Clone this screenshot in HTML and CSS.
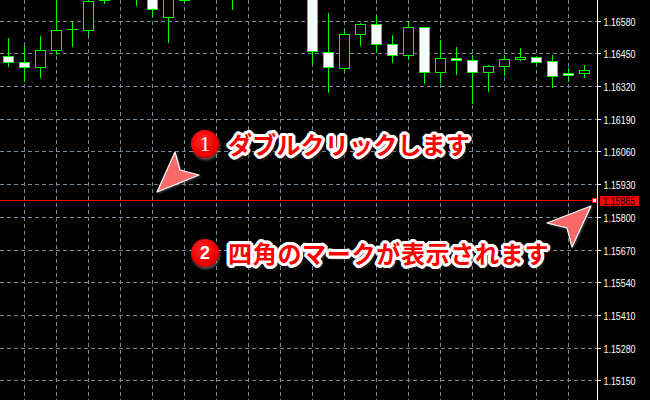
FILE: index.html
```html
<!DOCTYPE html>
<html lang="ja">
<head>
<meta charset="utf-8">
<title>Chart</title>
<link rel="stylesheet" href="styles.css">
</head>
<body>
<div class="chart">
  <svg class="plot" width="650" height="400" viewBox="0 0 650 400" xmlns="http://www.w3.org/2000/svg">
    <g class="grid">
      <path d="M0 21.5H597M0 53.5H597M0 86.5H597M0 119.5H597M0 151.5H597M0 184.5H597M0 217.5H597M0 250.5H597M0 282.5H597M0 315.5H597M0 348.5H597M0 380.5H597"/>
      <path d="M24.5 0V400M56.5 0V400M88.5 0V400M120.5 0V400M152.5 0V400M184.5 0V400M216.5 0V400M248.5 0V400M280.5 0V400M312.5 0V400M344.5 0V400M376.5 0V400M408.5 0V400M440.5 0V400M472.5 0V400M504.5 0V400M536.5 0V400M568.5 0V400"/>
    </g>
    <g class="wick">
      <path d="M8.5 38V67M24.5 46V82M40.5 36V78M56.5 0V55M72.5 22V47M88.5 0V35M104.5 0V4M136.5 0V6M152.5 0V17M168.5 0V43M184.5 0V2M232.5 0V10M312.5 0V63M328.5 13V93M344.5 31V71M360.5 23V46M376.5 16V53M392.5 35V63M408.5 21V60M424.5 27V84M440.5 40V83M456.5 47V75M472.5 55V104M488.5 65V92M504.5 55V76M520.5 48V61M536.5 57V65M552.5 55V88M568.5 68V82M584.5 65V78"/>
    </g>
    <g class="body-down">
      <rect x="35.5" y="50.5" width="10" height="17"/>
      <rect x="51.5" y="30.5" width="10" height="20"/>
      <rect x="83.5" y="1.5" width="10" height="29"/>
      <rect x="99.5" y="-5.5" width="10" height="6"/>
      <rect x="163.5" y="-5.5" width="10" height="23"/>
      <rect x="179.5" y="-5.5" width="10" height="6"/>
      <rect x="339.5" y="34.5" width="10" height="34"/>
      <rect x="355.5" y="24.5" width="10" height="10"/>
      <rect x="403.5" y="27.5" width="10" height="28"/>
      <rect x="435.5" y="58.5" width="10" height="14"/>
      <rect x="483.5" y="66.5" width="10" height="6"/>
      <rect x="499.5" y="59.5" width="10" height="7"/>
      <rect x="515.5" y="57.5" width="10" height="2"/>
      <rect x="579.5" y="70.5" width="10" height="3"/>
    </g>
    <g class="body-up">
      <rect x="3.5" y="56.5" width="10" height="6"/>
      <rect x="19.5" y="62.5" width="10" height="5"/>
      <rect x="147.5" y="-5.5" width="10" height="15"/>
      <rect x="307.5" y="-5.5" width="10" height="57"/>
      <rect x="323.5" y="52.5" width="10" height="15"/>
      <rect x="371.5" y="24.5" width="10" height="20"/>
      <rect x="387.5" y="44.5" width="10" height="11"/>
      <rect x="419.5" y="27.5" width="10" height="45"/>
      <rect x="451.5" y="58.5" width="10" height="2"/>
      <rect x="467.5" y="60.5" width="10" height="12"/>
      <rect x="531.5" y="57.5" width="10" height="5"/>
      <rect x="547.5" y="61.5" width="10" height="15"/>
      <rect x="563.5" y="73.5" width="10" height="2"/>
    </g>
    <path class="doji" d="M67 29.5H78"/>
    <path class="hline" d="M0 200.5H593"/>
    <rect class="hmark" x="592.5" y="198.5" width="4" height="4"/>
    <path class="axis" d="M597.5 0V400M597 21.5H601M597 53.5H601M597 86.5H601M597 119.5H601M597 151.5H601M597 184.5H601M597 217.5H601M597 250.5H601M597 282.5H601M597 315.5H601M597 348.5H601M597 380.5H601"/>
    <g class="ticks">
      <text x="603.5" y="25.5" textLength="32" lengthAdjust="spacingAndGlyphs">1.16580</text>
      <text x="603.5" y="57.5" textLength="32" lengthAdjust="spacingAndGlyphs">1.16450</text>
      <text x="603.5" y="90.5" textLength="32" lengthAdjust="spacingAndGlyphs">1.16320</text>
      <text x="603.5" y="123.5" textLength="32" lengthAdjust="spacingAndGlyphs">1.16190</text>
      <text x="603.5" y="155.5" textLength="32" lengthAdjust="spacingAndGlyphs">1.16060</text>
      <text x="603.5" y="188.5" textLength="32" lengthAdjust="spacingAndGlyphs">1.15930</text>
      <text x="603.5" y="221.5" textLength="32" lengthAdjust="spacingAndGlyphs">1.15800</text>
      <text x="603.5" y="254.5" textLength="32" lengthAdjust="spacingAndGlyphs">1.15670</text>
      <text x="603.5" y="286.5" textLength="32" lengthAdjust="spacingAndGlyphs">1.15540</text>
      <text x="603.5" y="319.5" textLength="32" lengthAdjust="spacingAndGlyphs">1.15410</text>
      <text x="603.5" y="352.5" textLength="32" lengthAdjust="spacingAndGlyphs">1.15280</text>
      <text x="603.5" y="384.5" textLength="32" lengthAdjust="spacingAndGlyphs">1.15150</text>
    </g>
    <rect class="price-tag" x="600" y="196" width="39" height="10"/>
    <text class="price-text" x="603" y="204.5" textLength="32" lengthAdjust="spacingAndGlyphs">1.15865</text>
  </svg>

  <svg class="pointer pointer-1" width="60" height="56" viewBox="150 145 60 56" xmlns="http://www.w3.org/2000/svg">
    <polygon points="157,192 175,152 180,170 199,175"/>
  </svg>
  <svg class="pointer pointer-2" width="60" height="56" viewBox="540 198 60 56" xmlns="http://www.w3.org/2000/svg">
    <polygon points="591,206 547,223 567,228 572,247"/>
  </svg>

  <div class="callout callout-1">
    <span class="num num-1">1</span>
    <span class="label label-1">ダブルクリックします</span>
  </div>
  <div class="callout callout-2">
    <span class="num num-2">2</span>
    <span class="label label-2">四角のマークが表示されます</span>
  </div>
</div>
</body>
</html>
```

FILE: styles.css
```css
html, body {
  margin: 0;
  padding: 0;
  background: #000;
}

.chart {
  position: relative;
  width: 650px;
  height: 400px;
  overflow: hidden;
  background: #000;
}

.plot {
  display: block;
}

.grid path {
  fill: none;
  stroke: #778899;
  stroke-width: 1;
  stroke-dasharray: 4 3;
  shape-rendering: crispEdges;
}

.wick path {
  fill: none;
  stroke: #00ff00;
  stroke-width: 1;
  shape-rendering: crispEdges;
}

.body-down rect {
  fill: #000;
  stroke: #00ff00;
  stroke-width: 1;
  shape-rendering: crispEdges;
}

.body-up rect {
  fill: #fff;
  stroke: #00ff00;
  stroke-width: 1;
  shape-rendering: crispEdges;
}

.doji {
  stroke: #00ff00;
  stroke-width: 1;
  shape-rendering: crispEdges;
}

.hline {
  stroke: #ff0000;
  stroke-width: 1;
  shape-rendering: crispEdges;
}

.hmark {
  fill: #fff;
  stroke: #ff0000;
  stroke-width: 1;
  shape-rendering: crispEdges;
}

.axis {
  fill: none;
  stroke: #fff;
  stroke-width: 1;
  shape-rendering: crispEdges;
}

.ticks text {
  fill: #fff;
  font-family: "Liberation Sans", Arial, sans-serif;
  font-size: 11.5px;
}

.price-tag {
  fill: #ff0000;
}

.price-text {
  fill: #000;
  font-family: "Liberation Sans", Arial, sans-serif;
  font-size: 11px;
}

.pointer {
  position: absolute;
  overflow: visible;
}

.pointer polygon {
  fill: #f86a6a;
  stroke: #fff;
  stroke-width: 1.2;
  stroke-linejoin: round;
  filter: drop-shadow(1px 1px 1px rgba(120, 120, 120, 0.6));
}

.pointer-1 {
  left: 150px;
  top: 145px;
}

.pointer-2 {
  left: 540px;
  top: 198px;
}

.callout {
  position: absolute;
  left: 191px;
  display: flex;
  align-items: center;
  gap: 9px;
  height: 28px;
}

.callout-1 {
  top: 130px;
}

.callout-2 {
  top: 239px;
}

.num {
  width: 28px;
  height: 28px;
  border-radius: 50%;
  background: radial-gradient(circle at 42% 38%, #ff2a2a 0%, #ee0000 55%, #c80000 100%);
  box-shadow: 1px 2px 3px rgba(200, 200, 200, 0.45);
  color: #fff;
  display: flex;
  align-items: center;
  justify-content: center;
  line-height: 1;
}

.num-1 {
  font-family: "Liberation Serif", "Times New Roman", serif;
  font-size: 22px;
}

.num-2 {
  font-family: "Liberation Sans", Arial, sans-serif;
  font-weight: bold;
  font-size: 18px;
}

.label {
  font-family: "Noto Sans CJK JP", sans-serif;
  font-weight: bold;
  font-size: 24px;
  line-height: 28px;
  color: #ff0000;
  white-space: nowrap;
  text-shadow:
    2px 0 0 #fff, -2px 0 0 #fff, 0 2px 0 #fff, 0 -2px 0 #fff,
    2px 2px 0 #fff, -2px 2px 0 #fff, 2px -2px 0 #fff, -2px -2px 0 #fff,
    3px 0 0 #fff, -3px 0 0 #fff, 0 3px 0 #fff, 0 -3px 0 #fff,
    3px 1px 0 #fff, -3px 1px 0 #fff, 3px -1px 0 #fff, -3px -1px 0 #fff,
    1px 3px 0 #fff, -1px 3px 0 #fff, 1px -3px 0 #fff, -1px -3px 0 #fff,
    3px 4px 3px rgba(60, 60, 60, 0.8);
}

.label-1 {
  letter-spacing: 0.2px;
}

.label-2 {
  letter-spacing: 0.7px;
}
```
